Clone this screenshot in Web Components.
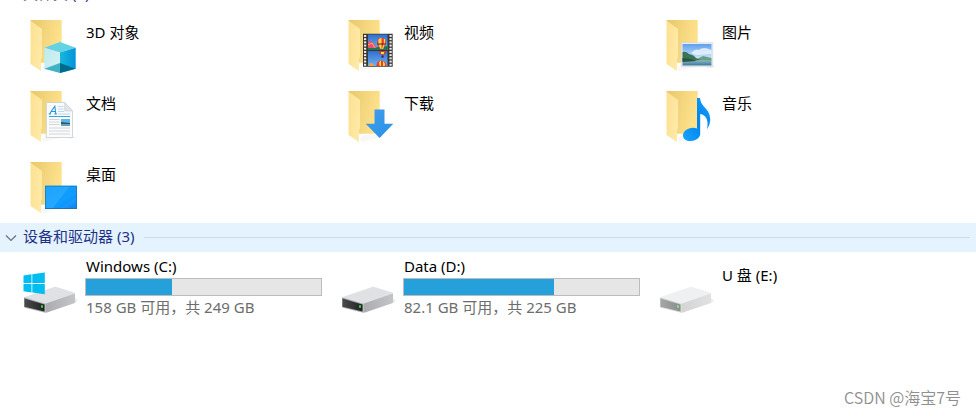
<!DOCTYPE html>
<html lang="zh-CN">
<head>
<meta charset="utf-8">
<title>此电脑</title>
<style>
html, body { margin: 0; height: 100%; }
body {
  background: #fff;
  color: #000;
  font: 15px/20px "Noto Sans", "Noto Sans CJK SC", sans-serif;
}
</style>
</head>
<body>
<explorer-view>
  <item-group label="文件夹 (7)">
    <folder-item icon="objects">3D 对象</folder-item>
    <folder-item icon="video">视频</folder-item>
    <folder-item icon="pictures">图片</folder-item>
    <folder-item icon="documents">文档</folder-item>
    <folder-item icon="downloads">下载</folder-item>
    <folder-item icon="music">音乐</folder-item>
    <folder-item icon="desktop">桌面</folder-item>
  </item-group>
  <item-group label="设备和驱动器 (3)" active>
    <drive-item icon="system" used="91" total="249">Windows (C:)<span slot="info">158 GB 可用，共 249 GB</span></drive-item>
    <drive-item icon="drive" used="143.5" total="225">Data (D:)<span slot="info">82.1 GB 可用，共 225 GB</span></drive-item>
    <drive-item icon="usb">U 盘 (E:)</drive-item>
  </item-group>
  <span slot="mark">CSDN @海宝7号</span>
</explorer-view>

<script>
const folder = `
  <defs>
    <linearGradient id="fb" x1="0" x2="1" y1="0" y2=".3"><stop offset="0" stop-color="#e8c767"/><stop offset=".5" stop-color="#f2d57c"/><stop offset="1" stop-color="#fee18b"/></linearGradient>
    <linearGradient id="ff" x1="0" x2="1" y1="0" y2=".4"><stop offset="0" stop-color="#fde090"/><stop offset="1" stop-color="#ffe9a6"/></linearGradient>
  </defs>
  <path d="M20 49 24 46H42V48L21 53Z" fill="#000" opacity=".03"/>
  <path d="M8.500 2H39.700V44.700H18Z" fill="url(#fb)"/>
  <path d="M8.500 2.500 20 11V39L19 41V53L8.500 46Z" fill="url(#ff)"/>`;

const balloon = (x, y) => `
  <g transform="translate(${x} ${y})">
    <path d="M-4.500 0a4.500 4.800 0 0 1 9 0C4.500 3 2 5 1.500 6.500H-1.500C-2 5-4.500 3-4.500 0Z" fill="#ef3b2c"/>
    <path d="M-2.700-3.500C-4 0-2 4-1 6.500H0V-4.800Z" fill="#ffd93b"/>
    <path d="M2.700-3.500C4 0 2 4 1 6.500" fill="none" stroke="#ffd93b" stroke-width="1.200"/>
    <path d="M-4.300 1.500H4.300" stroke="#31235c" stroke-width="1"/>
    <path d="M-1 7.500h2v2h-2z" fill="#4b2b16"/>
  </g>`;

const body = (top, side, front, led) => `
  <defs>
    <linearGradient id="ds" x1="0" x2="1"><stop offset="0" stop-color="${side[0]}"/><stop offset="1" stop-color="${side[1]}"/></linearGradient>
    <linearGradient id="df" x1="0" x2="1"><stop offset="0" stop-color="${front[0]}"/><stop offset="1" stop-color="${front[1]}"/></linearGradient>
  </defs>
  <path d="M23 53 53 43 56 41 53 38Z" fill="#000" opacity=".08"/>
  <path d="M2 37.300 32 26.900Q33 26.500 34.500 27L52 32.500Q53 33 53 34L23.300 44.500Z" fill="${top}"/>
  <path d="M23.300 43.700 53 33.500V42.300Q53 43 52 43.300L25 52.500 23.300 52.700Z" fill="url(#ds)"/>
  <path d="M2 37.300 23.300 43.700V52.700L3 47.800Q2 47.500 2 46.500Z" fill="${side[0]}"/>
  <path d="M2.500 38.500 22.500 44.600V51.600L2.500 46.800Z" fill="url(#df)"/>
  <path d="M19 45.300h2v2.500h-2z" fill="${led}"/>`;

const drive = body('#e0e1e5', ['#aaacaf', '#c4c5c8'], ['#4a4b4c', '#202122'], '#36d83c');

const sprocket = x => [17, 20.2, 23.4, 26.6, 29.8, 33, 36.2, 39.4, 42.6, 45.8]
  .map(y => `<rect x="${x}" y="${y}" width="2.200" height="1.900" fill="#f1f1f1"/>`).join('');

const icons = {
  objects: folder + `
    <defs>
      <linearGradient id="r" x1="0" x2="1"><stop offset="0" stop-color="#18b8dc"/><stop offset="1" stop-color="#0093dc"/></linearGradient>
      <linearGradient id="l" x1="0" x2="1" y2="1"><stop offset="0" stop-color="#bceaf0"/><stop offset="1" stop-color="#d9f3f4"/></linearGradient>
    </defs>
    <path d="M22.300 29.700 38 24 53.700 29.700 38 34.500Z" fill="#63d2e4"/>
    <path d="M22.300 29.700 38 34.500V55L22.300 50.700Z" fill="url(#l)"/>
    <path d="M53.700 29.700 38 34.500V55L53.700 50.700Z" fill="url(#r)"/>
    <path d="M22.300 50.700 38 45V55Z" fill="#43b3c4"/>
    <path d="M53.700 50.700 38 45V55Z" fill="#006b8c"/>`,
  video: folder + `
    <defs><linearGradient id="s" x2="0" y2="1"><stop offset="0" stop-color="#2f6fd0"/><stop offset="1" stop-color="#6eb2f1"/></linearGradient></defs>
    <path d="M23 15.700H52.700V48.700H23Z" fill="#383838"/>
    ${sprocket(24)}${sprocket(49.5)}
    <path d="M28 16.500H47.500V32H28Z" fill="url(#s)"/>
    <path d="M28 28Q34 30 47.500 28V32H28Z" fill="#237549"/>
    <path d="M28 24Q31 21 33 25L37 30H28Z" fill="#e8507b"/><path d="M28 27 32 25 35 30" stroke="#ffb43e" fill="none"/>
    ${balloon(41.5, 24.5)}
    <path d="M28 33H47.500V48H28Z" fill="url(#s)"/>
    <path d="M38 33.200H47L44.500 36.500H40.500Z" fill="#e5332c"/><path d="M41 34h3v2h-3z" fill="#ffd93b"/><path d="M41.500 37.500h2v2h-2z" fill="#332018"/>
    <path d="M36.500 48C36 41 46.500 41 46.500 48Z" fill="#ef3b2c"/><path d="M40 48C38.500 46 39 43 41 42.700V48M43 48V43Q46 46 44.500 48" fill="#ffd93b"/>
    <path d="M28.500 48Q31 42 34 48Z" fill="#ff9f31"/>`,
  pictures: folder + `
    <defs>
      <linearGradient id="s" x2="0" y2="1"><stop offset="0" stop-color="#5f9fec"/><stop offset="1" stop-color="#dff1fd"/></linearGradient>
      <linearGradient id="w" x2="0" y2="1"><stop offset="0" stop-color="#8fbccb"/><stop offset="1" stop-color="#3f7797"/></linearGradient>
    </defs>
    <path d="M54 48 57 48.700 48 50Z" fill="#000" opacity=".15"/>
    <path d="M23.300 24.700H54.700V48.700H23.300Z" fill="#eef1f4" stroke="#cfd4d9" stroke-width=".6"/>
    <path d="M24.500 26H53.500V43H24.500Z" fill="url(#s)"/>
    <path d="M33 35Q37 30 41 32 45 28 53.500 32V36L38 37Z" fill="#f3fafe" opacity=".75"/>
    <path d="M24.500 42H53.500V47.500H24.500Z" fill="url(#w)"/>
    <path d="M37 42 45 38 53.500 40V42.500Z" fill="#6aa181"/>
    <path d="M24.500 34Q28 33 31 36 36 37 38 40L43 42 24.500 43Z" fill="#397456"/>
    <path d="M24.500 40 33 41 39 43 24.500 44Z" fill="#255440"/>`,
  documents: folder + `
    <path d="M50 48 54 48 47 50Z" fill="#000" opacity=".15"/>
    <path d="M24.300 13.500H42.700L50.500 22V48.500H24.300Z" fill="#fafbfc" stroke="#c8cdd1" stroke-width=".8"/>
    <path d="M42.700 13.500V22H50.500Z" fill="#e2e5e8" stroke="#c8cdd1" stroke-width=".6"/>
    <path d="M27.500 25 32.800 17.300 33.800 25M29.300 22.500H33.500M26.700 25H29M32.300 25H35" stroke="#2598d5" fill="none" stroke-width="1.100"/>
    <path d="M36 17.500H41.500M36 20H41.500M36 22.500H42M36 25H48" stroke="#a9d2ea" stroke-width=".8"/>
    <path d="M27 27.500H48" stroke="#3da4dc"/>
    <path d="M27 30.500H37.500M27 33H37.500M27 35.500H37.500M27 39H48M27 42H48M27 45H48" stroke="#cfd3d6" stroke-width=".9"/>
    <path d="M39 30H48V36.500H39Z" fill="#5eb5e7"/><path d="M39 33 43 33.500 48 34V36.500H39Z" fill="#245c66"/><path d="M39 35H48V36.500H39Z" fill="#69a4c1"/>`,
  downloads: folder + `
    <defs><linearGradient id="a" x2="1" y2="1"><stop offset="0" stop-color="#449de8"/><stop offset="1" stop-color="#2592ec"/></linearGradient></defs>
    <path d="M34.500 20.500H44.500V34.700H53.300L39.600 49 25.700 34.700H34.500Z" fill="url(#a)"/>`,
  music: folder + `
    <defs><linearGradient id="n" x2="1" y1="1" y2="0"><stop offset="0" stop-color="#17a5ff"/><stop offset=".5" stop-color="#0085ee"/><stop offset="1" stop-color="#129fff"/></linearGradient></defs>
    <path d="M39 9H42C43 19 52.300 19 52.300 31Q52 36 49 40.500C51 31 48 26 42.200 25V45C42 49 37.500 52 32.500 52 28 52 25 50 25 46.500 25 41.500 32 37 39 39.500Z" fill="url(#n)"/>`,
  desktop: folder + `
    <defs><linearGradient id="k" x2="1" y2="1"><stop offset="0" stop-color="#1ba4ff"/><stop offset=".6" stop-color="#27a8ff"/><stop offset="1" stop-color="#0880ee"/></linearGradient></defs>
    <path d="M23 25.700H55V49H23Z" fill="url(#k)"/>
    <path d="M30 49 48 26H55V37L38 49Z" fill="#0092fb" opacity=".55"/>
    <path d="M23.500 26.200H54.500V48.500H23.500Z" fill="none" stroke="#1576bb" stroke-width=".7"/>
    <path d="M23 48H55V49H23Z" fill="#2473a5"/>`,
  drive,
  system: drive + `
    <path d="M1.500 15.500 9.500 14.300V23H1.500ZM10.300 14.200 22.800 12.500V23H10.300ZM1.500 23.900H9.500V32.400L1.500 31.300ZM10.300 23.900H22.800V34.200L10.300 32.500Z" fill="#00bdf2"/>`,
  usb: body('#eff0f2', ['#d3d4d4', '#e0e1e1'], ['#a4a5a5', '#8b8c8c'], '#83e587')
};

function define(name, html, setup) {
  const template = document.createElement('template');
  template.innerHTML = html;
  customElements.define(name, class extends HTMLElement {
    connectedCallback() {
      if (this.shadowRoot) return;
      const root = this.attachShadow({ mode: 'open' });
      root.append(template.content.cloneNode(true));
      if (setup) setup(this, root);
    }
  });
}

define('explorer-icon', `
  <style>
    :host { display: block; flex: none; width: 56px; height: 56px; }
    svg { display: block; width: 100%; height: 100%; overflow: visible; }
  </style>
  <svg viewBox="0 0 56 56" aria-hidden="true"></svg>`,
  (el, root) => {
    root.querySelector('svg').innerHTML = icons[el.getAttribute('name')];
  });

define('folder-item', `
  <style>
    :host { display: flex; gap: 8px; height: 63px; padding: 8px 0 0 22px; }
    .name { padding-top: 4px; }
  </style>
  <div class="icon"></div>
  <div class="name"><slot></slot></div>`,
  (el, root) => {
    root.querySelector('.icon').innerHTML = `<explorer-icon name="${el.getAttribute('icon')}"></explorer-icon>`;
  });

define('drive-item', `
  <style>
    :host { display: flex; gap: 7px; padding: 3px 0 0 22px; }
    .icon { padding-top: 4px; }
    .details { flex: none; width: 237px; }
    .name, .info { padding-left: 1px; }
    .info { color: #6d6d6d; }
    .plain { padding-top: 9px; }
    progress {
      appearance: none; display: block; box-sizing: border-box;
      width: 100%; height: 18px; margin: 2px 0 1px;
      border: 1px solid #bcbcbc; background: #e6e6e6;
    }
    progress::-webkit-progress-bar { background: #e6e6e6; }
    progress::-webkit-progress-value { background: #26a0da; }
  </style>
  <div class="icon"></div>
  <div class="details">
    <div class="name" id="name"><slot></slot></div>
    <progress aria-labelledby="name"></progress>
    <div class="info"><slot name="info"></slot></div>
  </div>`,
  (el, root) => {
    root.querySelector('.icon').innerHTML = `<explorer-icon name="${el.getAttribute('icon')}"></explorer-icon>`;
    const bar = root.querySelector('progress');
    if (el.hasAttribute('total')) {
      bar.max = Number(el.getAttribute('total'));
      bar.value = Number(el.getAttribute('used'));
    } else {
      bar.remove();
      root.querySelector('.info').remove();
      root.querySelector('.details').classList.add('plain');
    }
  });

define('item-group', `
  <style>
    :host { display: block; }
    button {
      display: flex; align-items: center; width: 100%; height: 29px;
      border: 0; padding: 0 6px 0 5px; background: none;
      color: #1e3287; font: inherit; text-align: left;
    }
    :host([active]) button { background: #e5f3ff; }
    svg { flex: none; width: 12px; height: 12px; margin-right: 6px; }
    .label { padding-bottom: 4px; }
    .rule { flex: 1; height: 1px; margin-left: 10px; background: #c9dbe8; }
    .items { display: grid; grid-template-columns: repeat(auto-fill, 318px); padding-top: 1px; }
  </style>
  <button type="button" aria-expanded="true">
    <svg viewBox="0 0 12 12" aria-hidden="true"><path d="M1 3.500 6 8.500 11 3.500" fill="none" stroke="#6b7178" stroke-width="1.200"/></svg>
    <span class="label"></span><span class="rule"></span>
  </button>
  <div class="items"><slot></slot></div>`,
  (el, root) => {
    root.querySelector('.label').textContent = el.getAttribute('label');
    const button = root.querySelector('button');
    const items = root.querySelector('.items');
    button.addEventListener('click', () => {
      items.hidden = !items.hidden;
      items.style.display = items.hidden ? 'none' : '';
      button.setAttribute('aria-expanded', String(!items.hidden));
    });
  });

define('explorer-view', `
  <style>
    :host { display: block; position: relative; min-height: 100%; overflow: hidden; }
    .scrolled { margin-top: -20px; }
    .mark {
      position: absolute; right: 15px; bottom: 9px;
      color: #8f8f8f; font: 350 16px/20px "Noto Sans CJK SC", sans-serif;
    }
  </style>
  <div class="scrolled"><slot></slot></div>
  <div class="mark"><slot name="mark"></slot></div>`);
</script>
</body>
</html>
